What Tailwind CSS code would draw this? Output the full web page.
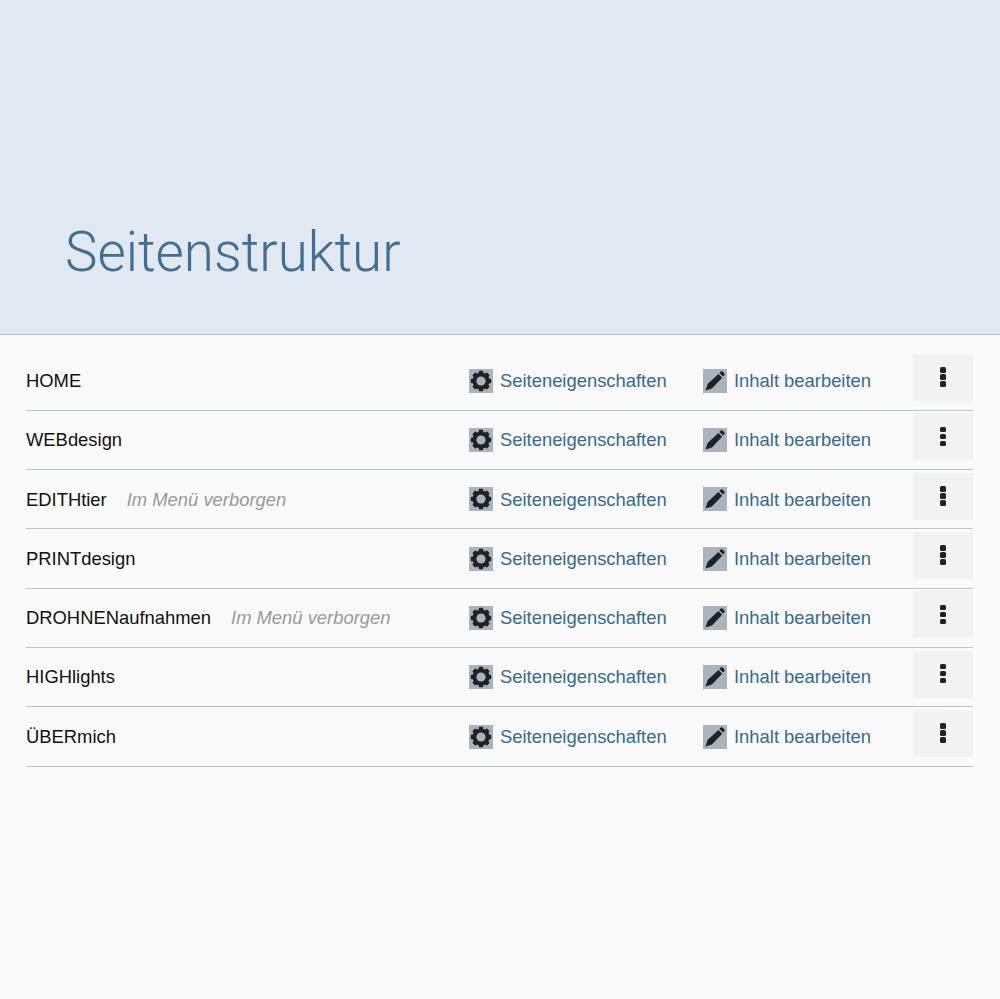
<!DOCTYPE html>
<html lang="de">
<head>
  <meta charset="UTF-8">
  <title>Seitenstruktur</title>
  <script src="https://cdn.jsdelivr.net/npm/@tailwindcss/browser@4"></script>
</head>
<body class="bg-[#fafafa] font-['Liberation_Sans',Arial,sans-serif]">
  <!-- Header -->
  <header class="h-[335px] bg-[#e1e8ef] border-b border-[#b4bec8] pl-[65px] pt-[219px]">
    <h1 class="font-['Roboto',sans-serif] font-light text-[54.7px] leading-[66px] text-[#3f6f94]">Seitenstruktur</h1>
  </header>

  <!-- Page list -->
  <main id="pages" class="pl-[26px] pr-[27px] pt-[16.6px]"></main>

  <script>
    const pages = [
      { name: "HOME" },
      { name: "WEBdesign" },
      { name: "EDITHtier", hidden: true },
      { name: "PRINTdesign" },
      { name: "DROHNENaufnahmen", hidden: true },
      { name: "HIGHlights" },
      { name: "ÜBERmich" },
    ];

    const gear = `
      <svg viewBox="0 0 24 24" class="w-6 h-6 bg-[#aab4bd] text-[#1d2227] shrink-0">
        <circle cx="12" cy="12" r="6.6" fill="none" stroke="currentColor" stroke-width="4"/>
        <g fill="currentColor">
          <rect x="9.8" y="1.8" width="4.4" height="20.4" rx="0.8"/>
          <rect x="9.8" y="1.8" width="4.4" height="20.4" rx="0.8" transform="rotate(45 12 12)"/>
          <rect x="9.8" y="1.8" width="4.4" height="20.4" rx="0.8" transform="rotate(90 12 12)"/>
          <rect x="9.8" y="1.8" width="4.4" height="20.4" rx="0.8" transform="rotate(135 12 12)"/>
        </g>
        <circle cx="12" cy="12" r="4.6" fill="#aab4bd"/>
      </svg>`;

    const pencil = `
      <svg viewBox="0 0 24 24" class="w-6 h-6 bg-[#aab4bd] text-[#1d2227] shrink-0">
        <path fill="currentColor" d="M2.5 21.5 4.6 15 15.4 4.9 19.2 8.7 8.9 19.4ZM16.4 3.9l1.4-1.3c.5-.4 1.2-.4 1.7 0l1.9 1.9c.4.5.4 1.2 0 1.7l-1.3 1.4Z"/>
      </svg>`;

    const list = document.getElementById('pages');
    pages.forEach((page) => {
      const row = document.createElement('div');
      row.className = 'flex h-[59.3px] border-b border-[#b9c5d0] text-[18.4px]';
      row.innerHTML = `
        <div class="flex-1 flex items-center gap-[20px]">
          <span class="text-[#111]">${page.name}</span>
          ${page.hidden ? '<em class="text-[#999]">Im Menü verborgen</em>' : ''}
        </div>
        <a class="w-[234px] flex items-center gap-[7px] text-[#336b92]">${gear}<span>Seiteneigenschaften</span></a>
        <a class="w-[210px] flex items-center gap-[7px] text-[#336b92]">${pencil}<span>Inhalt bearbeiten</span></a>
        <button class="w-[60px] h-[47px] mt-[2.6px] pb-[1px] bg-[#f2f2f2] flex flex-col items-center justify-center gap-[1.5px]">
          <i class="block w-[6px] h-[5.5px] rounded-[1.5px] bg-[#222]"></i>
          <i class="block w-[6px] h-[5.5px] rounded-[1.5px] bg-[#222]"></i>
          <i class="block w-[6px] h-[5.5px] rounded-[1.5px] bg-[#222]"></i>
        </button>`;
      list.appendChild(row);
    });
  </script>
</body>
</html>
